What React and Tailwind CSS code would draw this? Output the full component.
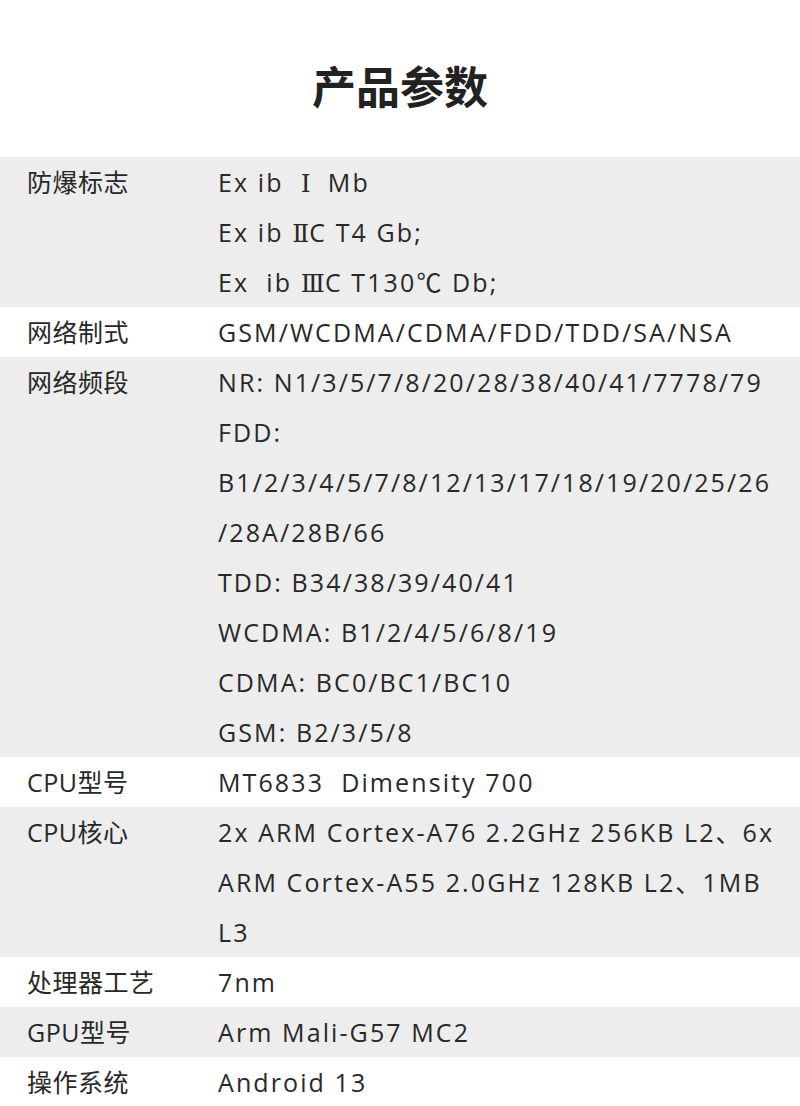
const R = ({ children }) => (
  <span className="font-['DejaVu_Serif',serif] text-[25px] leading-none tracking-normal">{children}</span>
);

const rows = [
  {
    label: "防爆标志",
    lines: [
      <>Ex ib  <R>Ⅰ</R>  Mb</>,
      <>Ex ib <R>Ⅱ</R>C T4 Gb;</>,
      <>Ex  ib <R>Ⅲ</R>C T130℃ Db;</>,
    ],
    gray: true,
  },
  { label: "网络制式", lines: ["GSM/WCDMA/CDMA/FDD/TDD/SA/NSA"] },
  {
    label: "网络频段",
    lines: [
      "NR: N1/3/5/7/8/20/28/38/40/41/7778/79",
      "FDD:",
      "B1/2/3/4/5/7/8/12/13/17/18/19/20/25/26",
      "/28A/28B/66",
      "TDD: B34/38/39/40/41",
      "WCDMA: B1/2/4/5/6/8/19",
      "CDMA: BC0/BC1/BC10",
      "GSM: B2/3/5/8",
    ],
    gray: true,
  },
  { label: "CPU型号", lines: ["MT6833  Dimensity 700"] },
  {
    label: "CPU核心",
    lines: ["2x ARM Cortex-A76 2.2GHz 256KB L2、6x", "ARM Cortex-A55 2.0GHz 128KB L2、1MB", "L3"],
    gray: true,
  },
  { label: "处理器工艺", lines: ["7nm"] },
  { label: "GPU型号", lines: ["Arm Mali-G57 MC2"], gray: true },
  { label: "操作系统", lines: ["Android 13"] },
];

export default function App() {
  return (
    <div className="w-[800px] h-[1106px] overflow-hidden bg-white text-[#282828] font-['Open_Sans','Noto_Sans_CJK_SC',sans-serif]">
      <div className="h-[157px] pt-[55px]">
        <h1 className="text-center text-[44px] leading-[60px] font-bold text-[#222] font-['Noto_Sans_CJK_SC',sans-serif]">
          产品参数
        </h1>
      </div>
      {rows.map((row, i) => (
        <div key={i} className={`flex ${row.gray ? "bg-[#ededed]" : "bg-white"}`}>
          <div className="w-[218px] shrink-0 pl-[27px] text-[25px] leading-[50px] tracking-[0.5px]">
            {row.label}
          </div>
          <div className="flex-1 text-[25px] leading-[50px] tracking-[2.1px] whitespace-pre">
            {row.lines.map((line, j) => (
              <div key={j} className="h-[50px]">{line}</div>
            ))}
          </div>
        </div>
      ))}
    </div>
  );
}
